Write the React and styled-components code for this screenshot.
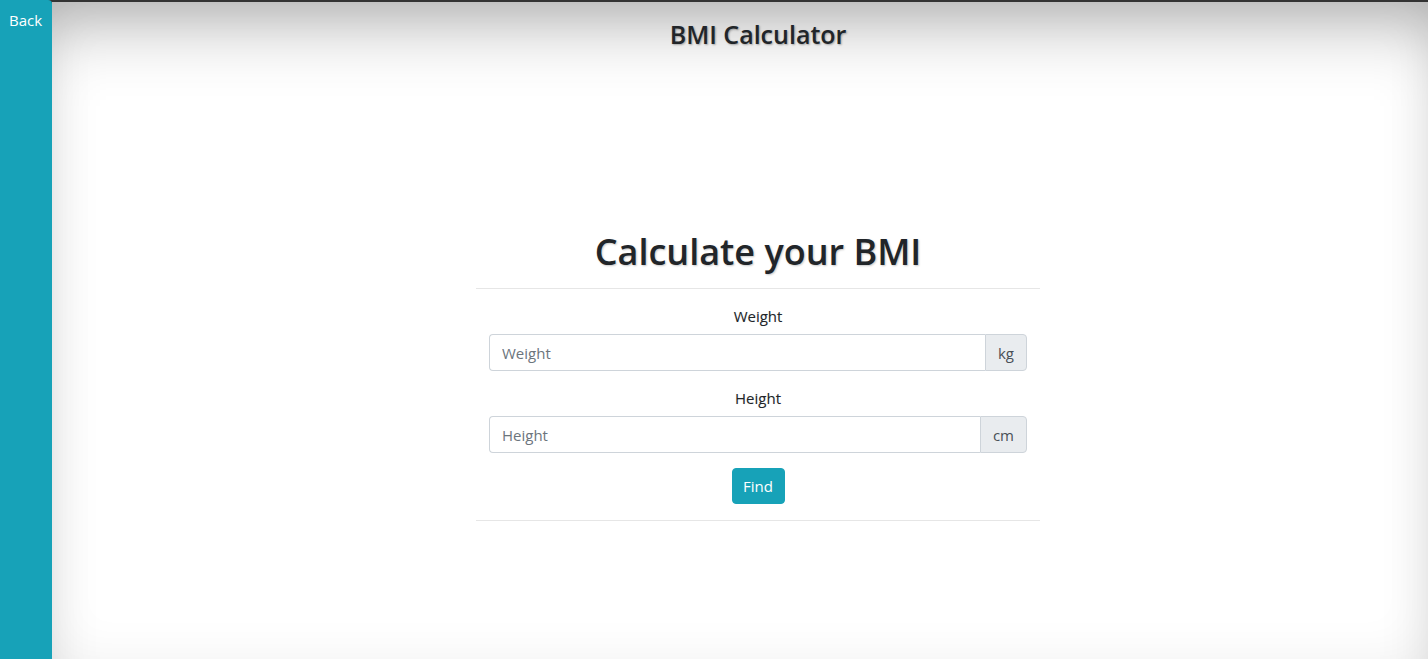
import React from 'react'
import styled, { createGlobalStyle } from 'styled-components'

const GlobalStyle = createGlobalStyle`
  html, body {
    margin: 0;
    padding: 0;
    background: #333;
    font-family: "Open Sans", "Noto Sans", "Liberation Sans", sans-serif;
    color: #212529;
  }
  * { box-sizing: border-box; }
`

const Page = styled.div`
  display: flex;
  height: 100vh;
  overflow: hidden;
`

const Sidebar = styled.aside`
  width: 52px;
  flex-shrink: 0;
  background-color: #17a2b8;
  border-top-right-radius: 4px;
  padding: 9px 0 0 9px;
`

const BackLink = styled.a`
  color: white;
  font-size: 15px;
  text-decoration: none;
  cursor: pointer;
`

const Main = styled.main`
  flex: 1;
  margin-top: 2px;
  padding-left: 36px;
  background: white;
  box-shadow: inset 0 0 50px rgba(0, 0, 0, 0.06),
    inset 0 50px 70px -30px rgba(0, 0, 0, 0.3);
  display: flex;
  flex-direction: column;
  align-items: center;
`

const Title = styled.h2`
  margin: 0;
  padding-top: 17px;
  font-size: 25px;
  line-height: 30px;
  font-weight: 600;
  text-shadow: 1px 1px 2px rgba(0, 0, 0, 0.3);
`

const Card = styled.section`
  width: 564px;
  margin-top: 179px;
  text-align: center;
`

const Heading = styled.h1`
  margin: 0 0 12px;
  font-size: 36px;
  line-height: 48px;
  font-weight: 600;
  text-shadow: 1px 1px 2px rgba(0, 0, 0, 0.22);
`

const Rule = styled.hr`
  margin: 0;
  border: 0;
  border-top: 1px solid #e6e6e6;
`

const Form = styled.form`
  padding: 15px 13px 16px 13px;
  display: flex;
  flex-direction: column;
  align-items: center;
`

const Label = styled.label`
  display: block;
  font-size: 15px;
  line-height: 24px;
  font-weight: 500;
  margin-bottom: 6px;
  text-shadow: 0 0 1px rgba(0, 0, 0, 0.15);
`

const InputGroup = styled.div`
  display: flex;
  width: 100%;
  height: 37px;
  margin-bottom: ${p => p.$gap}px;
`

const Input = styled.input`
  flex: 1;
  min-width: 0;
  height: 100%;
  padding: 0 12px;
  font: inherit;
  font-size: 15px;
  color: #495057;
  border: 1px solid #ced4da;
  border-right: 0;
  border-radius: 4px 0 0 4px;
  outline: none;
  &::placeholder {
    color: #6c757d;
  }
`

const Addon = styled.span`
  display: flex;
  align-items: center;
  padding: 0 12px;
  font-size: 15px;
  color: #495057;
  background: #e9ecef;
  border: 1px solid #ced4da;
  border-radius: 0 4px 4px 0;
`

const FindButton = styled.button`
  width: 53px;
  height: 36px;
  font: inherit;
  font-size: 15px;
  color: white;
  background-color: #17a2b8;
  border: 1px solid #17a2b8;
  border-radius: 4px;
  cursor: pointer;
`

const App = () => {
  return (
    <>
      <GlobalStyle />
      <Page>
        <Sidebar>
          <BackLink>Back</BackLink>
        </Sidebar>
        <Main>
          <Title>BMI Calculator</Title>
          <Card>
            <Heading>Calculate your BMI</Heading>
            <Rule />
            <Form onSubmit={e => e.preventDefault()}>
              <Label>Weight</Label>
              <InputGroup $gap={15}>
                <Input placeholder="Weight" />
                <Addon>kg</Addon>
              </InputGroup>
              <Label>Height</Label>
              <InputGroup $gap={15}>
                <Input placeholder="Height" />
                <Addon>cm</Addon>
              </InputGroup>
              <FindButton type="submit">Find</FindButton>
            </Form>
            <Rule />
          </Card>
        </Main>
      </Page>
    </>
  )
}

export default App
